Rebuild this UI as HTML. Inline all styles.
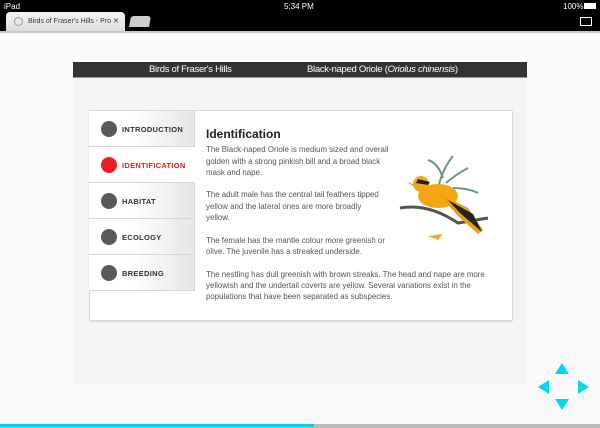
<!DOCTYPE html>
<html><head><style>
*{margin:0;padding:0;box-sizing:border-box}
body{width:600px;height:428px;overflow:hidden;background:#fafafa;font-family:"Liberation Sans",sans-serif;position:relative}
.abs{position:absolute}
.status{left:0;top:0;width:600px;height:13px;background:#000;color:#fff;font-size:8px}
.tabs{left:0;top:13px;width:600px;height:18px;background:#000}
.tab{left:6px;top:12px;width:119px;height:19px;background:linear-gradient(#f4f4f4,#ddd);border-radius:4px 4px 0 0;font-size:7px;color:#333;padding:5px 0 0 22px}
.line{left:0;top:31px;width:600px;height:2px;background:#c8c8c8}
.hdr{left:73px;top:62px;width:454px;height:16px;background:#333;border-bottom:1px solid #999;color:#fff;font-size:9.5px;letter-spacing:-.3px}
.panel{left:73px;top:78px;width:454px;height:306px;background:#f4f4f4}
.card{left:89px;top:110px;width:424px;height:211px;background:#fff;border:1px solid #d8d8d8;border-radius:2px;box-shadow:0 1px 1px #ddd}
.nav{left:89px;top:111px;width:106px}
.item{height:36px;border-bottom:1px solid #d6d6d6;border-right:1px solid #d6d6d6;background:linear-gradient(90deg,#fff 40%,#e6e6e6);font-size:7.5px;font-weight:bold;color:#333;letter-spacing:.3px;position:relative;padding:14px 0 0 33px}
.item.act{background:#fff;border-right:none;color:#e21c1c}
.dot{position:absolute;left:12px;top:10px;width:16px;height:16px;border-radius:50%;background:#5a5a5a}
.act .dot{background:#ee1c24}
.txt{left:206px;top:129px;width:310px;font-size:7.9px;line-height:11.3px;color:#555;white-space:nowrap}
.txt h2{font-size:12px;color:#222;margin-bottom:4px;font-weight:bold}
.txt p{margin-bottom:11.3px}
.tri{width:0;height:0;position:absolute}
</style></head><body>
<div class="abs status"><span class="abs" style="left:4px;top:2px">iPad</span><span class="abs" style="left:284px;top:2px">5:34 PM</span><span class="abs" style="left:563px;top:2px">100%</span><span class="abs" style="left:584px;top:3px;width:12px;height:6px;background:#fff"></span></div>
<div class="abs tabs"></div>
<div class="abs tab"><span class="abs" style="left:8px;top:5px;width:9px;height:9px;border-radius:50%;border:1px solid #999"></span>Birds of Fraser's Hills - Pro ✕</div>
<div class="abs" style="left:130px;top:16px;width:20px;height:11px;background:#ccc;border-radius:3px 3px 0 0;transform:skewX(-10deg)"></div>
<div class="abs" style="left:580px;top:17px;width:12px;height:9px;border:1px solid #fff"></div>
<div class="abs line"></div>
<div class="abs hdr"><span class="abs" style="left:76px;top:2px">Birds of Fraser's Hills</span><span class="abs" style="left:234px;top:2px">Black-naped Oriole (<i>Oriolus chinensis</i>)</span></div>
<div class="abs panel"></div>
<div class="abs card"></div>
<div class="abs nav">
<div class="item"><span class="dot"></span>INTRODUCTION</div>
<div class="item act"><span class="dot"></span>IDENTIFICATION</div>
<div class="item"><span class="dot"></span>HABITAT</div>
<div class="item"><span class="dot"></span>ECOLOGY</div>
<div class="item"><span class="dot"></span>BREEDING</div>
</div>
<div class="abs txt"><h2>Identification</h2>
<p>The Black-naped Oriole is medium sized and overall<br>golden with a strong pinkish bill and a broad black<br>mask and nape.</p>
<p>The adult male has the central tail feathers tipped<br>yellow and the lateral ones are more broadly<br>yellow.</p>
<p>The female has the mantle colour more greenish or<br>olive. The juvenile has a streaked underside.</p>
<p>The nestling has dull greenish with brown streaks. The head and nape are more<br>yellowish and the undertail coverts are yellow. Several variations exist in the<br>populations that have been separated as subspecies.</p></div>
<svg class="abs" style="left:398px;top:148px" width="105" height="95" viewBox="0 0 105 95">
<g stroke="#6a9a7a" stroke-width="2" fill="none"><path d="M40 40 Q45 20 55 8"/><path d="M48 35 Q60 25 70 20"/><path d="M55 40 Q70 40 80 45"/><path d="M45 30 Q40 15 30 12"/></g>
<path d="M2 60 Q30 55 60 75 L90 70" stroke="#555" stroke-width="3" fill="none"/>
<ellipse cx="40" cy="48" rx="20" ry="12" fill="#f4a712"/>
<circle cx="23" cy="36" r="8" fill="#f4a712"/>
<path d="M20 31 L32 34 L30 37 L18 35Z" fill="#222"/>
<path d="M15 36 L9 34 L15 38Z" fill="#d58a7a"/>
<path d="M40 45 L70 60 L85 82 L80 86 L60 68Z" fill="#e8a010"/>
<path d="M50 52 L75 66 L84 84 L62 65Z" fill="#222"/>
<path d="M30 88 L45 86 L40 92Z" fill="#e8b020"/>
</svg>
<div class="tri" style="left:555px;top:363px;border-left:7px solid transparent;border-right:7px solid transparent;border-bottom:11px solid #00d8f0"></div>
<div class="tri" style="left:555px;top:399px;border-left:7px solid transparent;border-right:7px solid transparent;border-top:11px solid #00d8f0"></div>
<div class="tri" style="left:538px;top:380px;border-top:7px solid transparent;border-bottom:7px solid transparent;border-right:11px solid #00d8f0"></div>
<div class="tri" style="left:578px;top:380px;border-top:7px solid transparent;border-bottom:7px solid transparent;border-left:11px solid #00d8f0"></div>
<div class="abs" style="left:0;top:424px;width:600px;height:4px;background:#bbb"></div>
<div class="abs" style="left:0;top:424px;width:314px;height:3px;background:#00cfe6"></div>
</body></html>
